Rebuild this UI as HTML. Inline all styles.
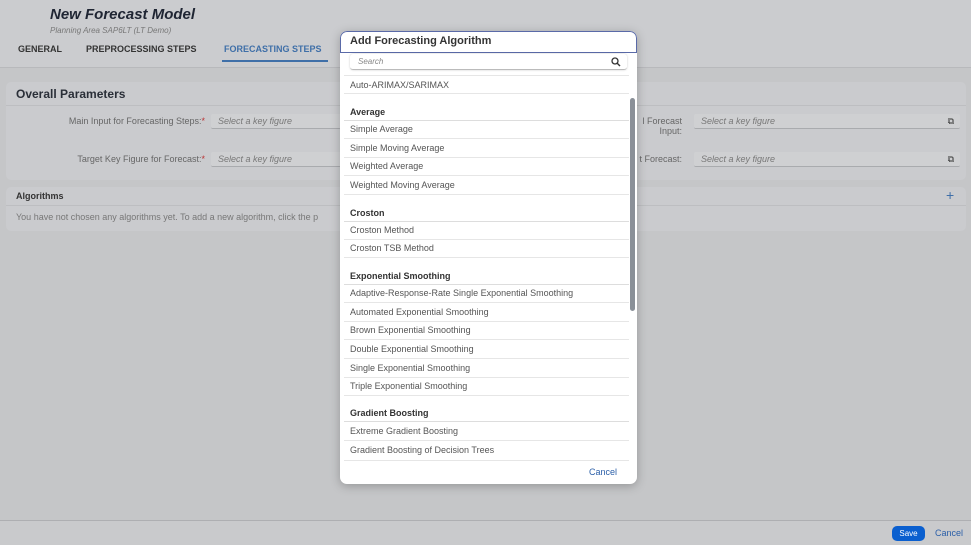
<!DOCTYPE html>
<html><head><style>
*{margin:0;padding:0;box-sizing:border-box}
body{width:971px;height:545px;background:#c5c6c8;font-family:"Liberation Sans",sans-serif;position:relative;overflow:hidden;color:#555}
.a{position:absolute;white-space:nowrap}
.inp{position:absolute;height:15px;background:#cfd0d2;border-bottom:1px solid #a9abae;border-radius:2px;font-size:9px;font-style:italic;color:#777;padding:2px 7px}
.lab{position:absolute;font-size:9px;color:#666;text-align:right}
.r{position:absolute;left:10px;font-size:9px;color:#555}
.h{position:absolute;left:10px;font-size:9px;font-weight:bold;color:#333}
.ln{position:absolute;left:4px;right:8px;height:1px;background:#e6e6e6}
</style></head><body>
<div class="a" style="left:0;top:0;width:971px;height:68px;background:#cbcccf"></div>
<div class="a" style="left:0;top:67px;width:971px;height:1px;background:#b8b9bc"></div>
<div class="a" style="left:50px;top:6px;font-size:15px;font-weight:bold;font-style:italic;color:#1f2533">New Forecast Model</div>
<div class="a" style="left:50px;top:26px;font-size:8px;font-style:italic;color:#777">Planning Area SAP6LT (LT Demo)</div>
<div class="a" style="left:18px;top:44px;font-size:9px;font-weight:bold;color:#333">GENERAL</div>
<div class="a" style="left:86px;top:44px;font-size:9px;font-weight:bold;color:#333">PREPROCESSING STEPS</div>
<div class="a" style="left:224px;top:44px;font-size:9px;font-weight:bold;color:#3f6fa8">FORECASTING STEPS</div>
<div class="a" style="left:222px;top:60px;width:106px;height:2px;background:#3f6fa8"></div>

<div class="a" style="left:6px;top:82px;width:960px;height:98px;background:#cacbce;border-radius:5px"></div>
<div class="a" style="left:6px;top:105px;width:960px;height:1px;background:#bdbec1"></div>
<div class="a" style="left:16px;top:87px;font-size:12px;font-weight:bold;color:#2a2f38">Overall Parameters</div>
<div class="lab" style="left:20px;top:116px;width:185px">Main Input for Forecasting Steps:<span style="color:#b33">*</span></div>
<div class="inp" style="left:211px;top:114px;width:130px">Select a key figure</div>
<div class="lab" style="left:20px;top:154px;width:185px">Target Key Figure for Forecast:<span style="color:#b33">*</span></div>
<div class="inp" style="left:211px;top:152px;width:130px">Select a key figure</div>
<div class="lab" style="left:630px;top:116px;width:52px;line-height:10px">l Forecast<br>Input:</div>
<div class="inp" style="left:694px;top:114px;width:266px">Select a key figure<span style="position:absolute;right:6px;font-style:normal;color:#333">⧉</span></div>
<div class="lab" style="left:630px;top:154px;width:52px">t Forecast:</div>
<div class="inp" style="left:694px;top:152px;width:266px">Select a key figure<span style="position:absolute;right:6px;font-style:normal;color:#333">⧉</span></div>

<div class="a" style="left:6px;top:187px;width:960px;height:44px;background:#cacbce;border-radius:5px"></div>
<div class="a" style="left:6px;top:205px;width:960px;height:1px;background:#bdbec1"></div>
<div class="a" style="left:16px;top:191px;font-size:9px;font-weight:bold;color:#333">Algorithms</div>
<div class="a" style="left:946px;top:187px;font-size:14px;color:#3f6fa8">+</div>
<div class="a" style="left:16px;top:212px;font-size:9px;color:#777">You have not chosen any algorithms yet. To add a new algorithm, click the p</div>

<div class="a" style="left:0;top:520px;width:971px;height:25px;background:#c9cacc;border-top:1px solid #aeafb2"></div>
<div class="a" style="left:892px;top:526px;width:33px;height:15px;background:#0a5fcf;border-radius:5px;color:#fff;font-size:8px;text-align:center;line-height:15px">Save</div>
<div class="a" style="left:935px;top:528px;font-size:9px;color:#2b5fa8">Cancel</div>

<div class="a" style="left:340px;top:31px;width:297px;height:453px;background:#fff;border-radius:7px;box-shadow:0 2px 10px rgba(0,0,0,.25);overflow:hidden">
 <div class="a" style="left:0;top:0;width:297px;height:22px;border:1.5px solid #5a6aa8;border-radius:7px 7px 0 0"></div>
 <div class="a" style="left:10px;top:4px;font-size:11px;font-weight:bold;color:#333">Add Forecasting Algorithm</div>
 <div class="a" style="left:10px;top:23px;width:277px;height:16px;border-bottom:1px solid #bbb;border-radius:3px;box-shadow:0 0 2px rgba(0,0,0,.2);font-size:8px;font-style:italic;color:#888;padding:3px 8px">Search
  <svg style="position:absolute;right:6px;top:3px" width="10" height="10" viewBox="0 0 10 10"><circle cx="4" cy="4" r="3" fill="none" stroke="#333" stroke-width="1.3"/><path d="M6.2 6.2L9 9" stroke="#333" stroke-width="1.4"/></svg></div>
 <div class="ln" style="top:44px"></div>
 <div class="r" style="top:49px">Auto-ARIMAX/SARIMAX</div>
 <div class="ln" style="top:62px"></div>
 <div class="h" style="top:76px">Average</div><div class="ln" style="top:89px;background:#ddd"></div>
 <div class="r" style="top:93px">Simple Average</div><div class="ln" style="top:107px"></div>
 <div class="r" style="top:112px">Simple Moving Average</div><div class="ln" style="top:126px"></div>
 <div class="r" style="top:130px">Weighted Average</div><div class="ln" style="top:144px"></div>
 <div class="r" style="top:149px">Weighted Moving Average</div><div class="ln" style="top:163px"></div>
 <div class="h" style="top:177px">Croston</div><div class="ln" style="top:190px;background:#ddd"></div>
 <div class="r" style="top:194px">Croston Method</div><div class="ln" style="top:208px"></div>
 <div class="r" style="top:212px">Croston TSB Method</div><div class="ln" style="top:226px"></div>
 <div class="h" style="top:240px">Exponential Smoothing</div><div class="ln" style="top:253px;background:#ddd"></div>
 <div class="r" style="top:257px">Adaptive-Response-Rate Single Exponential Smoothing</div><div class="ln" style="top:271px"></div>
 <div class="r" style="top:276px">Automated Exponential Smoothing</div><div class="ln" style="top:290px"></div>
 <div class="r" style="top:294px">Brown Exponential Smoothing</div><div class="ln" style="top:308px"></div>
 <div class="r" style="top:313px">Double Exponential Smoothing</div><div class="ln" style="top:327px"></div>
 <div class="r" style="top:332px">Single Exponential Smoothing</div><div class="ln" style="top:346px"></div>
 <div class="r" style="top:350px">Triple Exponential Smoothing</div><div class="ln" style="top:364px"></div>
 <div class="h" style="top:377px">Gradient Boosting</div><div class="ln" style="top:390px;background:#ddd"></div>
 <div class="r" style="top:395px">Extreme Gradient Boosting</div><div class="ln" style="top:409px"></div>
 <div class="r" style="top:414px">Gradient Boosting of Decision Trees</div><div class="ln" style="top:429px"></div>
 <div class="a" style="left:249px;top:436px;font-size:9px;color:#2b5fa8">Cancel</div>
 <div class="a" style="left:290px;top:67px;width:5px;height:213px;background:#8a9098;border-radius:3px"></div>
</div>
</body></html>
